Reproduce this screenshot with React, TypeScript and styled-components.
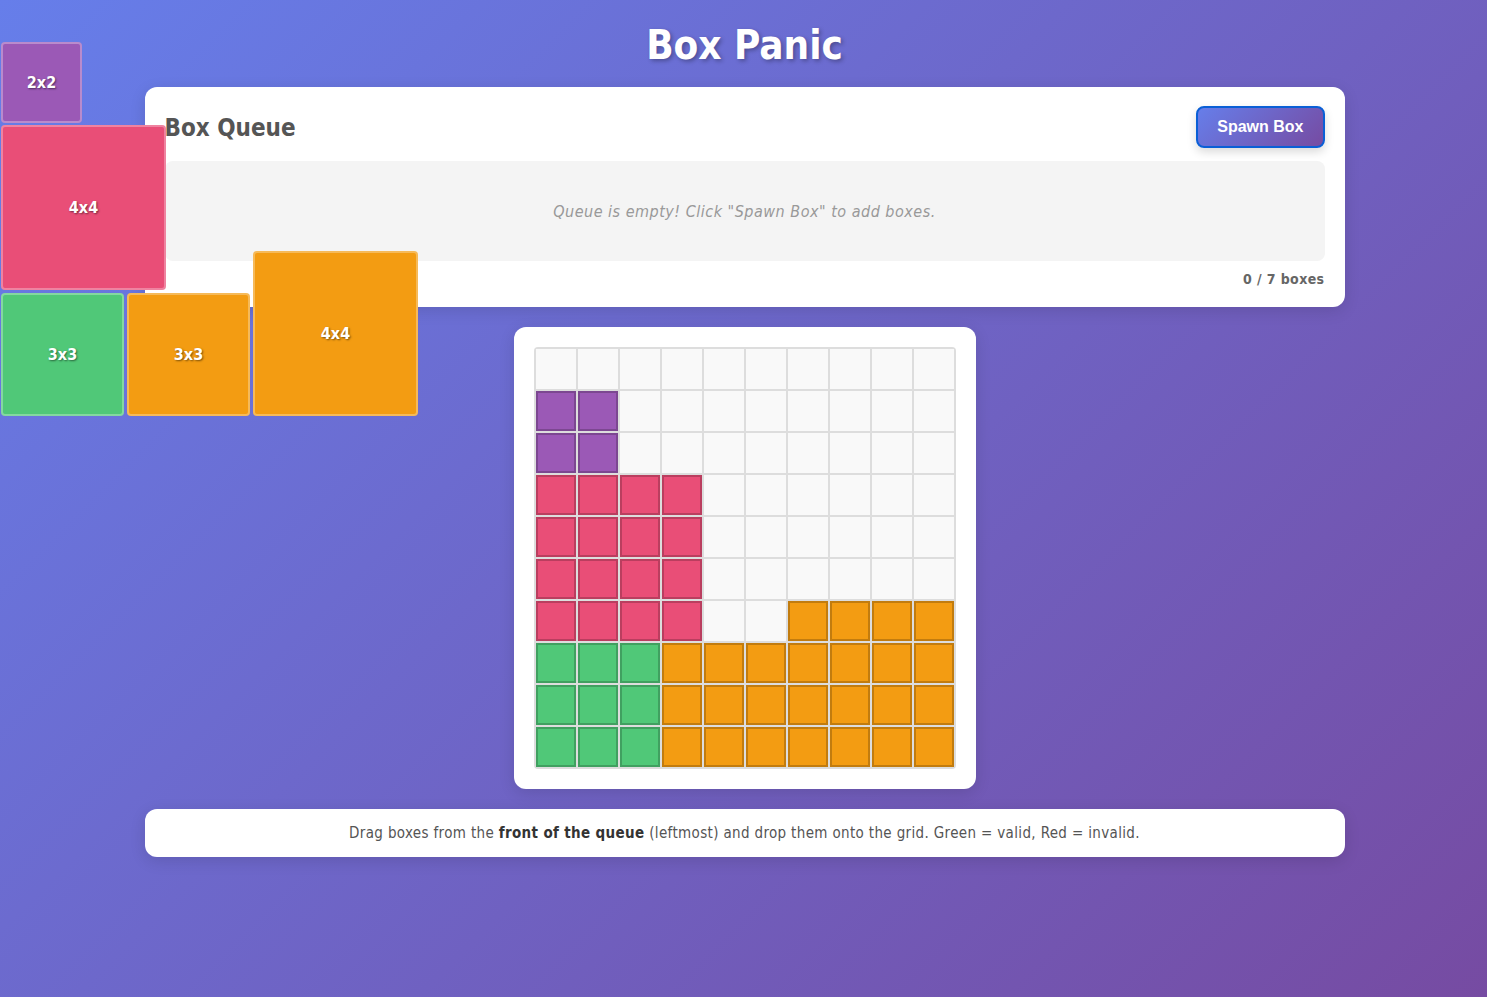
import React from 'react';
import styled, { createGlobalStyle } from 'styled-components';

const GlobalStyle = createGlobalStyle`
  html, body {
    margin: 0;
    padding: 0;
  }
  body {
    min-height: 100vh;
    background: linear-gradient(135deg, #667eea 0%, #764ba2 100%);
    font-family: "DejaVu Sans Condensed", "DejaVu Sans", sans-serif;
  }
`;

const Page = styled.div`
  position: relative;
  min-height: 100vh;
  padding: 21px 20px 40px 22px;
  box-sizing: border-box;
`;

const Container = styled.div`
  max-width: 1200px;
  margin: 0 auto;
  display: flex;
  flex-direction: column;
  align-items: center;
  gap: 20px;
`;

const Title = styled.h1`
  margin: 0 0 -2px;
  font-size: 40px;
  line-height: 48px;
  font-weight: 700;
  color: #fff;
  text-shadow: 2px 2px 4px rgba(0, 0, 0, 0.3);
`;

const Card = styled.div`
  background: #fff;
  border-radius: 12px;
  box-shadow: 0 4px 16px rgba(0, 0, 0, 0.12);
  box-sizing: border-box;
`;

const QueueCard = styled(Card)`
  width: 100%;
  padding: 20px;
`;

const QueueHeader = styled.div`
  display: flex;
  justify-content: space-between;
  align-items: center;
  margin-bottom: 13px;
`;

const QueueTitle = styled.h2`
  margin: 0;
  padding-top: 1px;
  font-size: 24px;
  font-weight: 700;
  color: #555;
`;

const SpawnButton = styled.button`
  margin-top: -1px;
  padding: 10px 19px;
  border: 2px solid #0a5fd6;
  border-radius: 8px;
  background: linear-gradient(135deg, #667eea 0%, #764ba2 100%);
  color: #fff;
  font-family: "Liberation Sans", Arial, sans-serif;
  font-size: 16px;
  font-weight: 700;
  cursor: pointer;
  box-shadow: 0 4px 10px rgba(0, 0, 0, 0.15);
`;

const QueueArea = styled.div`
  height: 100px;
  border-radius: 8px;
  background: #f4f4f4;
  display: flex;
  align-items: center;
  justify-content: center;
`;

const EmptyText = styled.span`
  font-size: 16px;
  letter-spacing: 0.5px;
  font-style: italic;
  color: #999;
`;

const Counter = styled.div`
  margin-top: 10px;
  text-align: right;
  font-size: 14px;
  letter-spacing: 0.4px;
  font-weight: 700;
  color: #666;
`;

const GridCard = styled(Card)`
  padding: 20px;
`;

const Grid = styled.div`
  display: grid;
  grid-template-columns: repeat(10, 40px);
  grid-auto-rows: 40px;
  gap: 2px;
  padding: 2px;
  background: #ddd;
  border-radius: 4px;
`;

const Cell = styled.div<{ $color?: string }>`
  box-sizing: border-box;
  background: ${p => p.$color ?? '#f9f9f9'};
  border: ${p => (p.$color ? '2px solid rgba(0, 0, 0, 0.2)' : 'none')};
`;

const Instructions = styled(Card)`
  width: 100%;
  padding: 15px;
  text-align: center;
  font-size: 15px;
  letter-spacing: 0.35px;
  line-height: 18px;
  color: #555;

  strong {
    color: #333;
  }
`;

const FloatingBox = styled.div<{ $size: number; $color: string; $x: number; $y: number }>`
  position: absolute;
  left: ${p => p.$x}px;
  top: ${p => p.$y}px;
  width: ${p => p.$size * 42 - 3}px;
  height: ${p => p.$size * 42 - 3}px;
  box-sizing: border-box;
  background: ${p => p.$color};
  border: 2px solid rgba(255, 255, 255, 0.3);
  border-radius: 4px;
  display: flex;
  align-items: center;
  justify-content: center;
  color: #fff;
  font-size: 16px;
  font-weight: 700;
  text-shadow: 1px 1px 2px rgba(0, 0, 0, 0.5);
  cursor: grab;
`;

const PURPLE = '#9b59b6';
const PINK = '#e94e77';
const GREEN = '#50c878';
const ORANGE = '#f39c12';

const placed = [
  { r: 1, c: 0, n: 2, color: PURPLE },
  { r: 3, c: 0, n: 4, color: PINK },
  { r: 7, c: 0, n: 3, color: GREEN },
  { r: 7, c: 3, n: 3, color: ORANGE },
  { r: 6, c: 6, n: 4, color: ORANGE },
];

const cellColor = (r: number, c: number) => {
  const hit = placed.find(b => r >= b.r && r < b.r + b.n && c >= b.c && c < b.c + b.n);
  return hit?.color;
};

const floating = [
  { n: 2, color: PURPLE, x: 1, y: 42 },
  { n: 4, color: PINK, x: 1, y: 125 },
  { n: 3, color: GREEN, x: 1, y: 293 },
  { n: 3, color: ORANGE, x: 127, y: 293 },
  { n: 4, color: ORANGE, x: 253, y: 251 },
];

export default function App() {
  return (
    <>
      <GlobalStyle />
      <Page>
        <Container>
          <Title>Box Panic</Title>

          <QueueCard>
            <QueueHeader>
              <QueueTitle>Box Queue</QueueTitle>
              <SpawnButton>Spawn Box</SpawnButton>
            </QueueHeader>
            <QueueArea>
              <EmptyText>Queue is empty! Click "Spawn Box" to add boxes.</EmptyText>
            </QueueArea>
            <Counter>0 / 7 boxes</Counter>
          </QueueCard>

          <GridCard>
            <Grid>
              {Array.from({ length: 100 }, (_, i) => (
                <Cell key={i} $color={cellColor(Math.floor(i / 10), i % 10)} />
              ))}
            </Grid>
          </GridCard>

          <Instructions>
            Drag boxes from the <strong>front of the queue</strong> (leftmost) and drop them onto the grid. Green = valid, Red = invalid.
          </Instructions>
        </Container>

        {floating.map((b, i) => (
          <FloatingBox key={i} $size={b.n} $color={b.color} $x={b.x} $y={b.y}>
            {b.n}x{b.n}
          </FloatingBox>
        ))}
      </Page>
    </>
  );
}
